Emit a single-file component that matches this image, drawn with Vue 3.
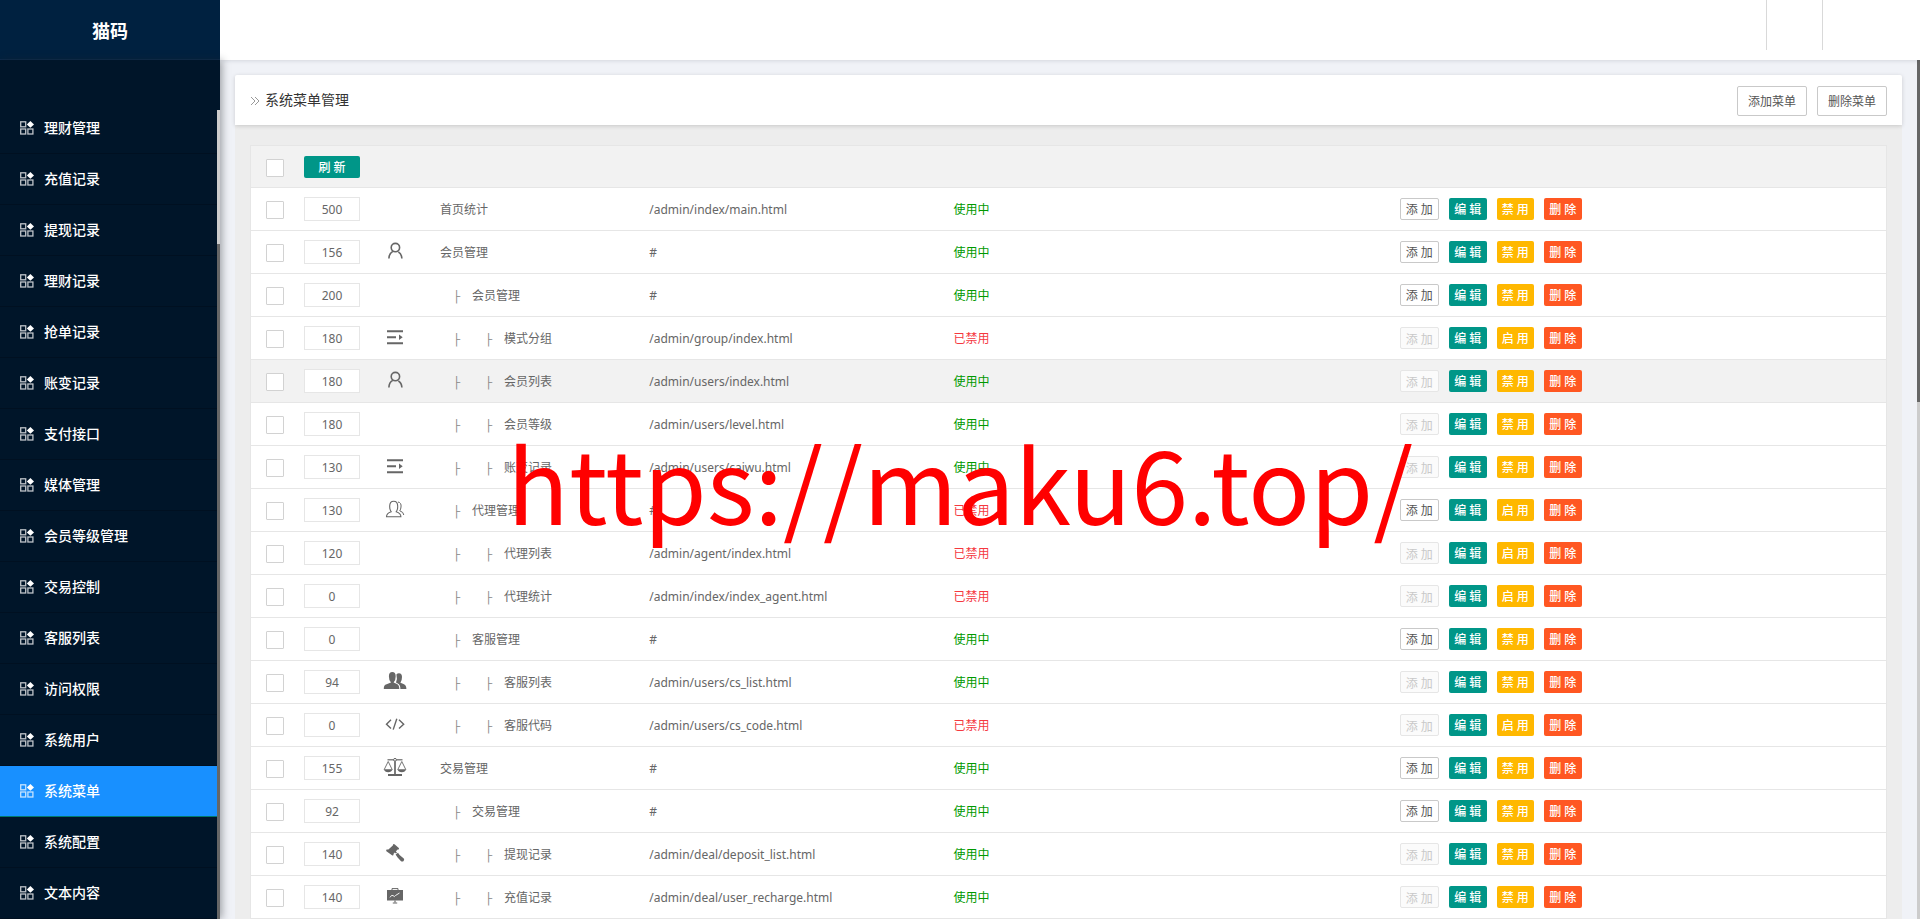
<script setup>
const menu = ['理财管理', '充值记录', '提现记录', '理财记录', '抢单记录', '账变记录', '支付接口', '媒体管理', '会员等级管理', '交易控制', '客服列表', '访问权限', '系统用户', '系统菜单', '系统配置', '文本内容']
const active = '系统菜单'

const rows = [
  { sort: 500, icon: '', depth: 0, name: '首页统计', url: '/admin/index/main.html', on: true },
  { sort: 156, icon: 'user', depth: 0, name: '会员管理', url: '#', on: true },
  { sort: 200, icon: '', depth: 1, name: '会员管理', url: '#', on: true },
  { sort: 180, icon: 'indent', depth: 2, name: '模式分组', url: '/admin/group/index.html', on: false },
  { sort: 180, icon: 'user', depth: 2, name: '会员列表', url: '/admin/users/index.html', on: true, hover: true },
  { sort: 180, icon: '', depth: 2, name: '会员等级', url: '/admin/users/level.html', on: true },
  { sort: 130, icon: 'indent', depth: 2, name: '账变记录', url: '/admin/users/caiwu.html', on: true },
  { sort: 130, icon: 'group', depth: 1, name: '代理管理', url: '#', on: false },
  { sort: 120, icon: '', depth: 2, name: '代理列表', url: '/admin/agent/index.html', on: false },
  { sort: 0, icon: '', depth: 2, name: '代理统计', url: '/admin/index/index_agent.html', on: false },
  { sort: 0, icon: '', depth: 1, name: '客服管理', url: '#', on: true },
  { sort: 94, icon: 'friends', depth: 2, name: '客服列表', url: '/admin/users/cs_list.html', on: true },
  { sort: 0, icon: 'code', depth: 2, name: '客服代码', url: '/admin/users/cs_code.html', on: false },
  { sort: 155, icon: 'scale', depth: 0, name: '交易管理', url: '#', on: true },
  { sort: 92, icon: '', depth: 1, name: '交易管理', url: '#', on: true },
  { sort: 140, icon: 'hammer', depth: 2, name: '提现记录', url: '/admin/deal/deposit_list.html', on: true },
  { sort: 140, icon: 'board', depth: 2, name: '充值记录', url: '/admin/deal/user_recharge.html', on: true }
]
</script>

<template>
  <div class="layout">
    <aside class="side">
      <h1 class="logo">猫码</h1>
      <div class="side-scroll">
        <nav class="nav">
          <a v-for="m in menu" :key="m" href="#" :class="['nav-item', { active: m === active }]">
            <svg class="nav-icon" viewBox="0 0 14 14" aria-hidden="true">
              <g fill="none" stroke="currentColor" stroke-opacity=".75" stroke-width="1.3">
                <rect x=".7" y=".8" width="5" height="5" />
                <rect x=".7" y="8" width="5" height="5" />
                <rect x="7.9" y="8" width="5" height="5" />
              </g>
              <path d="M10.4 0 L14 3.4 L10.4 6.8 L6.8 3.4 Z" fill="currentColor" />
            </svg>
            <span>{{ m }}</span>
          </a>
        </nav>
        <div class="side-bar"><div class="side-thumb"></div></div>
      </div>
    </aside>

    <div class="main">
      <header class="top">
        <div class="top-cell"></div>
        <div class="top-cell wide"></div>
      </header>

      <div class="body">
        <section class="page-head">
          <svg class="chev" viewBox="0 0 10 10" aria-hidden="true">
            <path d="M1 1 L5 5 L1 9 M5 1 L9 5 L5 9" fill="none" stroke="currentColor" />
          </svg>
          <h2>系统菜单管理</h2>
          <button type="button" class="head-btn">添加菜单</button>
          <button type="button" class="head-btn">删除菜单</button>
        </section>

        <section class="panel">
          <table>
            <colgroup>
              <col class="c-check"><col class="c-sort"><col class="c-icon"><col class="c-name"><col class="c-url"><col class="c-state"><col>
            </colgroup>
            <thead>
              <tr>
                <th class="check"><input type="checkbox" aria-label="全选"></th>
                <th colspan="6"><button type="button" class="btn refresh">刷 新</button></th>
              </tr>
            </thead>
            <tbody>
              <tr v-for="(r, i) in rows" :key="i" :class="{ hover: r.hover }">
                <td class="check"><input type="checkbox" :aria-label="r.name"></td>
                <td><input class="sort" type="text" :value="r.sort" aria-label="排序"></td>
                <td class="icon">
                  <svg v-if="r.icon" viewBox="0 0 24 20" fill="none" stroke="currentColor" stroke-width="1.6" aria-hidden="true">
                    <template v-if="r.icon === 'user'">
                      <circle cx="12.4" cy="6.6" r="4.2" />
                      <path d="M5.9 17.5 Q6 12.5 9.8 10.4 M15.4 11 Q18.6 12.8 18.9 17.5" />
                    </template>
                    <template v-else-if="r.icon === 'indent'">
                      <path d="M4 4.3H20M4 10.3H13M4 16.3H20" stroke-width="2" />
                      <path d="M16 7.6 L19.7 10.3 L16 13Z" fill="currentColor" stroke="none" />
                    </template>
                    <template v-else-if="r.icon === 'group'">
                      <path d="M3.5 17.8 Q3.5 14.2 8.2 12.8 Q6.6 10.8 6.7 7 Q6.8 2.2 10.7 2.2 Q14.6 2.2 14.7 7 Q14.8 10.8 13.2 12.8 Q17.9 14.2 17.9 17.8Z" stroke-width="1.1" />
                      <path d="M15 3 Q18.6 3.6 18 8 Q17.8 10.3 16.8 11.8 Q20.6 13 20.8 16" stroke-width="1" />
                    </template>
                    <template v-else-if="r.icon === 'friends'">
                      <g fill="currentColor" stroke="none">
                        <path d="M.8 18 Q.6 14 3.6 13.2 L8 11.5 Q5.8 9 5.9 5.2 Q6 1 9.3 1 Q12.6 1 12.7 5.2 Q12.8 9 10.6 11.5 L14 13 Q16.3 14 16.3 18Z" />
                        <path d="M13.4 3.5 Q14.4 2.2 16 2.2 Q19 2.3 19 6 Q19 9.7 17.4 11.8 L20.5 13 Q23.4 14 23.4 18 H17.4 Q17.4 13.6 14.8 12.4 L13 11.5 Q14.6 8 13.4 3.5Z" />
                      </g>
                    </template>
                    <template v-else-if="r.icon === 'code'">
                      <path d="M8 5.8 L3.5 10.2 L8 14.6 M16 5.8 L20.7 10.2 L16 14.6 M13.8 4.8 L10.2 15.6" stroke-width="1.4" />
                    </template>
                    <template v-else-if="r.icon === 'scale'">
                      <path d="M4.5 2.8H19.5" stroke-width="1.2" />
                      <circle cx="12" cy="2.8" r="1.4" fill="#fff" stroke-width="1" />
                      <path d="M12 4.2V18" stroke-width="1.7" />
                      <path d="M5 18H19" stroke-width="2" />
                      <path d="M5.2 4.5 L1.2 12.6 M5.2 4.5 L9.2 12.6 M18.8 4.5 L14.8 12.6 M18.8 4.5 L22.8 12.6" stroke-width=".9" />
                      <path d="M.8 12.2H9.6Q8.6 15.2 5.2 15.2Q1.8 15.2 .8 12.2Z M14.4 12.2H23.2Q22.2 15.2 18.8 15.2Q15.4 15.2 14.4 12.2Z" fill="currentColor" stroke="none" />
                    </template>
                    <template v-else-if="r.icon === 'hammer'">
                      <g fill="currentColor" stroke="none">
                        <path d="M10.2 1.2 Q11 .6 11.8 1.4 L15.8 5 Q16.4 5.8 15.6 6.4 L14.6 6.4 L12.8 8.4 L14 9.6 L13 10.6 L11.8 9.6 L10.4 11 L10.6 12 Q10 12.8 9 12.2 L3.4 8.2 Q2.8 7.4 3.6 6.6 L5.4 6.6 L9.8 2.6 Z" />
                        <path d="M12.6 11.6 L15 9.8 L16.6 12 L20.8 15.6 Q21.8 17 20.4 18.2 Q19 19 17.8 18 L14.4 14.2Z" />
                      </g>
                    </template>
                    <template v-else>
                      <path d="M9 4.4V2.6H15V4.4" stroke-width="1" />
                      <rect x="4" y="4" width="16" height="10.5" fill="currentColor" stroke="none" />
                      <path d="M7 11.4 Q8.5 8.5 10 9.5 Q11.4 11.6 12.5 9.5 L16.5 7" stroke="#fff" stroke-width=".9" />
                      <path d="M12 14.5V16.2M9.8 17H14.2" stroke-width="1.2" />
                    </template>
                  </svg>
                </td>
                <td class="text"><span v-for="n in r.depth" :key="n" class="branch">├</span>{{ r.name }}</td>
                <td class="text">{{ r.url }}</td>
                <td :class="['text', r.on ? 'on' : 'off']">{{ r.on ? '使用中' : '已禁用' }}</td>
                <td>
                  <div class="acts">
                    <button type="button" class="btn plain" :disabled="r.depth === 2">添 加</button>
                    <button type="button" class="btn">编 辑</button>
                    <button type="button" class="btn warm">{{ r.on ? '禁 用' : '启 用' }}</button>
                    <button type="button" class="btn danger">删 除</button>
                  </div>
                </td>
              </tr>
            </tbody>
          </table>
        </section>
        <div class="page-bar"><div class="page-thumb"></div></div>
      </div>
    </div>
    <div class="watermark">https://maku6.top/</div>
  </div>
</template>

<style>
body {
  margin: 0;
  overflow: hidden;
}
</style>

<style scoped>
* {
  box-sizing: border-box;
}

.layout {
  position: relative;
  display: flex;
  height: 100vh;
  overflow: hidden;
  background: #f0f2f7;
  color: #666;
  font: 12px/20px "Noto Sans", "Noto Sans CJK SC", sans-serif;
}

button,
input {
  margin: 0;
  font: inherit;
}

.side {
  z-index: 2;
  display: flex;
  flex-direction: column;
  flex: none;
  width: 220px;
}

.logo {
  flex: none;
  height: 60px;
  margin: 0;
  border-bottom: 1px solid #0c2a4b;
  background: #002140;
  color: #fff;
  font-size: 18px;
  font-weight: 700;
  line-height: 62px;
  text-align: center;
}

.side-scroll {
  position: relative;
  flex: 1;
  min-height: 0;
  padding-top: 43px;
  background: #001529;
  box-shadow: 2px 0 8px rgba(29, 35, 41, .4);
}

.nav {
  height: 100%;
  overflow: hidden;
}

.nav-item {
  display: flex;
  align-items: center;
  gap: 10px;
  height: 51px;
  padding-left: 20px;
  border-bottom: 1px solid #001021;
  color: #fff;
  font-size: 14px;
  font-weight: 500;
  text-decoration: none;
}

.nav-item.active {
  border-bottom-color: #00796b;
  background: #1890ff;
}

.nav-icon {
  width: 14px;
  height: 14px;
}

.side-bar {
  position: absolute;
  top: 50px;
  right: 0;
  bottom: 0;
  width: 3px;
  background: #666;
}

.side-thumb {
  height: 134px;
  background: #ccc;
}

.main {
  display: flex;
  flex: 1;
  flex-direction: column;
  min-width: 0;
}

.top {
  z-index: 1;
  display: flex;
  flex: none;
  justify-content: flex-end;
  height: 60px;
  background: #fff;
  box-shadow: 0 1px 4px rgba(0, 21, 41, .12);
}

.top-cell {
  width: 56px;
  height: 50px;
  border-left: 1px solid #d9d9d9;
}

.top-cell.wide {
  width: 98px;
}

.body {
  position: relative;
  flex: 1;
  min-height: 0;
  padding: 15px 18px 0 15px;
  overflow: hidden;
}

.page-head {
  position: relative;
  display: flex;
  align-items: center;
  gap: 10px;
  height: 50px;
  padding: 0 15px;
  background: #fff;
  border-radius: 2px 2px 0 0;
  box-shadow: 0 1px 4px rgba(0, 0, 0, .16);
}

.chev {
  width: 10px;
  height: 10px;
  margin-top: 2px;
  color: #999;
}

.page-head h2 {
  flex: 1;
  margin: 0 0 0 -5px;
  color: #333;
  font-size: 14px;
  font-weight: 400;
}

.head-btn {
  width: 70px;
  height: 30px;
  margin-top: 2px;
  padding: 2px 0 0;
  border: 1px solid #c9c9c9;
  border-radius: 2px;
  background: #fff;
  color: #555;
}

.panel {
  padding: 20px 15px;
  background: #ededed;
}

table {
  width: 100%;
  border: 1px solid #e6e6e6;
  border-spacing: 0;
  table-layout: fixed;
  background: #fff;
}

.c-check {
  width: 43px;
}

.c-sort {
  width: 66px;
}

.c-icon {
  width: 70px;
}

.c-name {
  width: 12.8%;
}

.c-url {
  width: 18.6%;
}

.c-state {
  width: 27.3%;
}

th,
td {
  height: 43px;
  padding: 0 0 0 10px;
  border-bottom: 1px solid #e6e6e6;
  text-align: left;
  white-space: nowrap;
}

th {
  height: 42px;
  background: #f2f2f2;
}

.text {
  padding-top: 2px;
}

.hover td {
  background: #f2f2f2;
}

.check {
  padding-left: 15px;
}

.check input {
  display: block;
  width: 18px;
  height: 18px;
  margin-top: 2px;
  border: 1px solid #d2d2d2;
  border-radius: 1px;
  background: #fff;
  appearance: none;
}

.sort {
  display: block;
  width: 56px;
  height: 24px;
  padding: 0;
  border: 1px solid #e6e6e6;
  background: #fff;
  color: #666;
  text-align: center;
}

.icon {
  padding: 0;
  text-align: center;
}

.icon svg {
  display: block;
  width: 24px;
  height: 20px;
  margin: 0 auto 2px;
}

.branch {
  display: inline-block;
  width: 32px;
  padding-left: 13px;
  color: #888;
  font-family: "Liberation Mono", monospace;
  line-height: 12px;
}

.on {
  color: #090;
}

.off {
  color: #f5383f;
}

.acts {
  display: flex;
  gap: 10px;
}

.btn {
  min-width: 38px;
  height: 22px;
  padding: 2px 4px 0;
  border: 0;
  border-radius: 2px;
  background: #009688;
  color: #fff;
  font-weight: 500;
  line-height: 20px;
}

.refresh {
  display: block;
  width: 56px;
}

.plain {
  min-width: 39px;
  border: 1px solid #c9c9c9;
  background: #fff;
  color: #555;
  font-weight: 400;
  line-height: 18px;
}

.plain:disabled {
  padding-top: 3px;
  border-color: #e6e6e6;
  background: #fbfbfb;
  color: #c9c9c9;
  line-height: 17px;
}

.warm {
  min-width: 37px;
  background: #ffb800;
}

.danger {
  background: #ff5722;
}

.page-bar {
  position: absolute;
  top: 0;
  right: 0;
  bottom: 0;
  width: 3px;
  background: #ccc;
}

.page-thumb {
  height: 342px;
  background: #666;
}

.watermark {
  position: absolute;
  top: 416px;
  left: 507px;
  z-index: 5;
  color: #f00;
  font: 102px/130px "Noto Sans CJK SC", sans-serif;
  pointer-events: none;
}
</style>
